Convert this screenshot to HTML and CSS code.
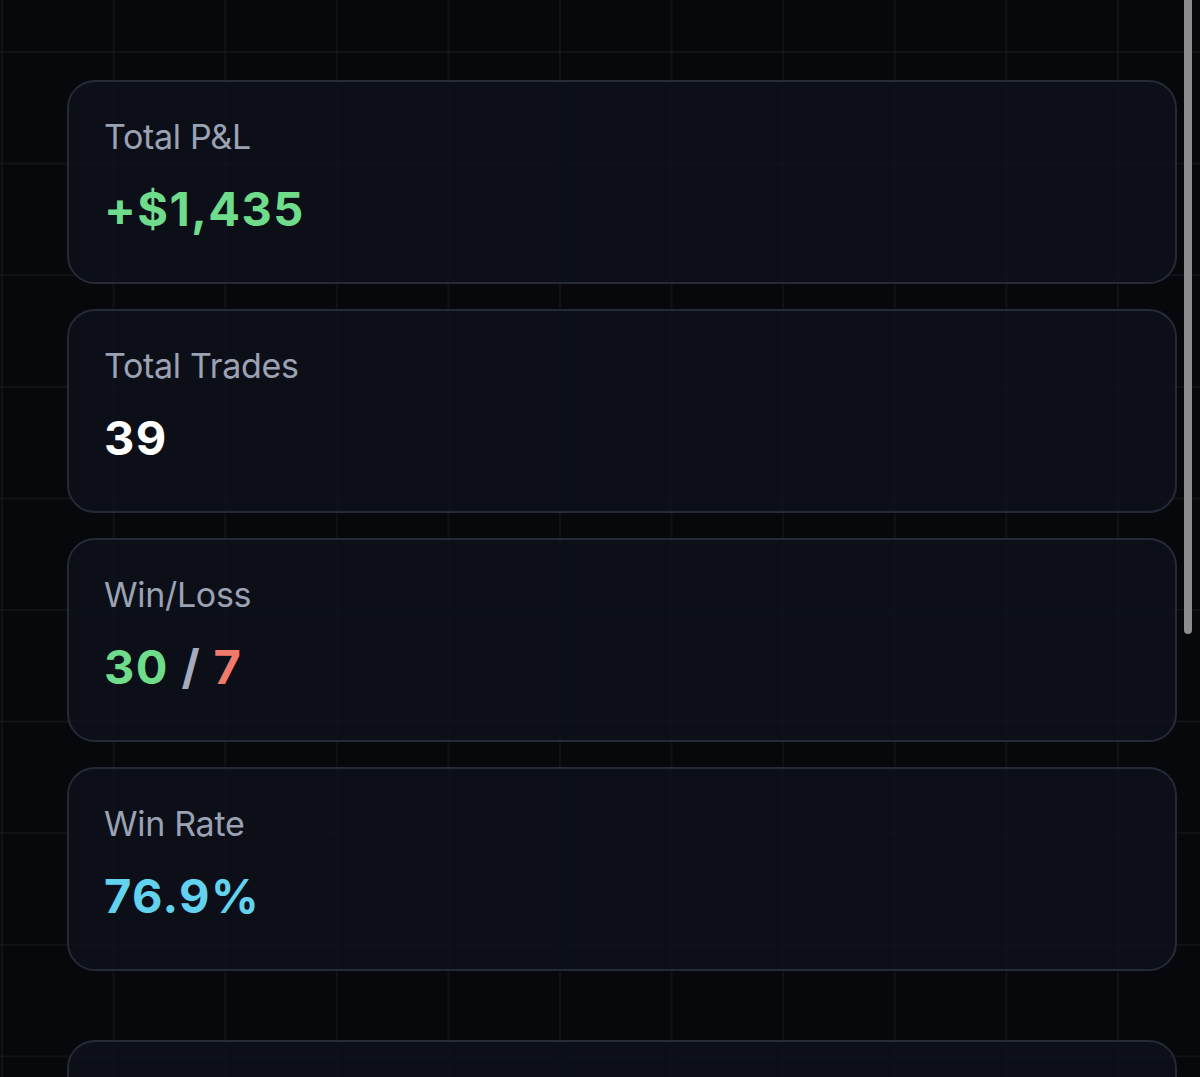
FILE: index.html
```html
<!DOCTYPE html>
<html lang="en">
<head>
<meta charset="utf-8">
<title>Stats</title>
<link rel="stylesheet" href="styles.css">
</head>
<body>
<main class="page">
  <section class="stats">
    <div class="card">
      <div class="label">Total P&amp;L</div>
      <div class="value green">+$1,435</div>
    </div>
    <div class="card">
      <div class="label">Total Trades</div>
      <div class="value white">39</div>
    </div>
    <div class="card">
      <div class="label">Win/Loss</div>
      <div class="value"><span class="green">30</span> <span class="slash">/</span> <span class="red">7</span></div>
    </div>
    <div class="card">
      <div class="label">Win Rate</div>
      <div class="value cyan">76.9%</div>
    </div>
  </section>
  <section class="next">
    <div class="card"></div>
  </section>
</main>
<div class="scrollbar"></div>
</body>
</html>
```

FILE: styles.css
```css
html, body {
  margin: 0;
  padding: 0;
  height: 100%;
  overflow: hidden;
}

body {
  background-color: #07080b;
  background-image:
    linear-gradient(to right, rgba(255,255,255,0.04) 0, rgba(255,255,255,0.04) 2px, transparent 2px),
    linear-gradient(to bottom, rgba(255,255,255,0.04) 0, rgba(255,255,255,0.04) 2px, transparent 2px);
  background-size: 111.6px 111.6px;
  background-position: 1px 51px;
  font-family: Inter, "Noto Sans", sans-serif;
  position: relative;
}

.page {
  padding: 80px 23px 0 67px;
}

.stats {
  display: flex;
  flex-direction: column;
  gap: 25px;
}

.next {
  margin-top: 69px;
}

.card {
  border: 2px solid #242a36;
  border-radius: 28px;
  background: rgba(13, 17, 27, 0.82);
  padding: 34px 36px 46px 35px;
  min-height: 120px;
}

.label {
  font-size: 34px;
  line-height: 41px;
  letter-spacing: -0.3px;
  color: #9aa2b3;
  font-weight: 400;
}

.value {
  margin-top: 24px;
  font-size: 47px;
  line-height: 55px;
  letter-spacing: 1.4px;
  font-weight: 700;
  color: #ffffff;
}

.green { color: #6fdc8c; }
.white { color: #ffffff; }
.red { color: #f07a6c; }
.cyan { color: #62d2ee; }
.slash { color: #a4abbd; }

.scrollbar {
  position: absolute;
  top: -6px;
  right: 8px;
  width: 8px;
  height: 640px;
  border-radius: 4px;
  background: #8c8c8e;
}
```
